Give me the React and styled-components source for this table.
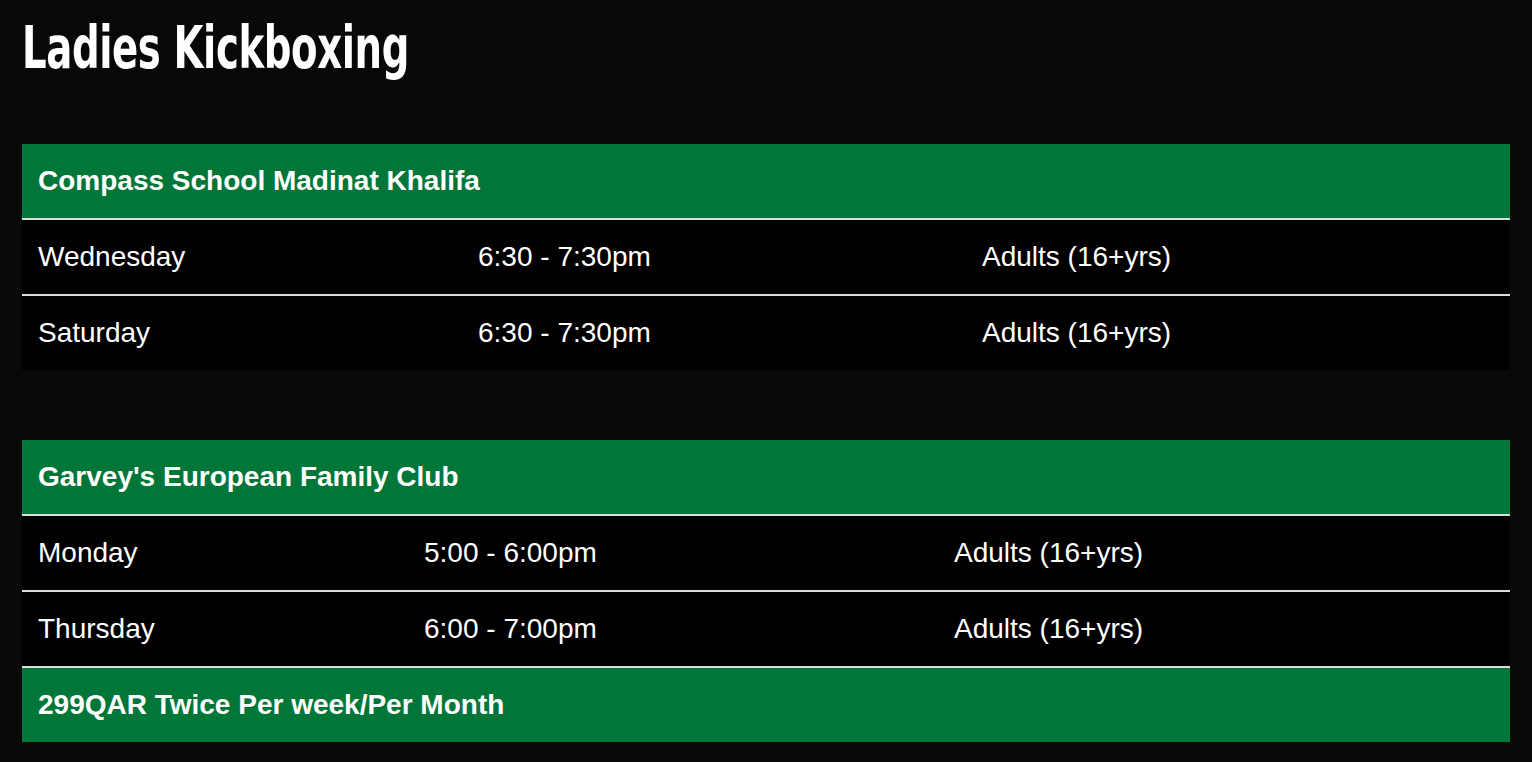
import React from "react";
import styled, { createGlobalStyle } from "styled-components";

// Ladies kickboxing timetable

const GlobalStyle = createGlobalStyle`
  body {
    margin: 0;
    background: #080808;
    font-family: "Liberation Sans", Arial, sans-serif;
    color: #fff;
  }
`;

const Page = styled.div`
  padding: 0 22px 20px;
`;

const Title = styled.h1`
  margin: 0;
  padding: 14px 0 0;
  height: 144px;
  box-sizing: border-box;
  font-family: "DejaVu Sans Condensed", "DejaVu Sans", sans-serif;
  font-weight: 700;
  font-size: 58px;
  line-height: 68px;
  letter-spacing: -0.5px;
  transform: scaleX(0.74);
  transform-origin: left top;
  white-space: nowrap;
`;

const Table = styled.table`
  width: 100%;
  table-layout: fixed;
  border-collapse: separate;
  border-spacing: 0;
  background: #000;
  font-size: 28px;
  line-height: 28px;
  & + & {
    margin-top: 70px;
  }
`;

const Col = styled.col`
  width: ${(p) => p.$w}px;
`;

const Row = styled.tr`
  & + & > td {
    border-top: 2px solid #dcdcdc;
  }
`;

const Cell = styled.td`
  padding: 23px 16px;
  vertical-align: middle;
  white-space: nowrap;
`;

const Banner = styled(Cell)`
  background: #007638;
  font-weight: 700;
`;

const venues = [
  {
    name: "Compass School Madinat Khalifa",
    cols: [440, 504, 544],
    rows: [
      ["Wednesday", "6:30 - 7:30pm", "Adults (16+yrs)"],
      ["Saturday", "6:30 - 7:30pm", "Adults (16+yrs)"],
    ],
  },
  {
    name: "Garvey's European Family Club",
    cols: [386, 530, 572],
    rows: [
      ["Monday", "5:00 - 6:00pm", "Adults (16+yrs)"],
      ["Thursday", "6:00 - 7:00pm", "Adults (16+yrs)"],
    ],
    price: "299QAR Twice Per week/Per Month",
  },
];

export default function App() {
  return (
    <Page>
      <GlobalStyle />
      <Title>Ladies Kickboxing</Title>
      {venues.map((v) => (
        <Table key={v.name}>
          <colgroup>
            {v.cols.map((w, i) => (
              <Col key={i} $w={w} />
            ))}
          </colgroup>
          <tbody>
            <Row>
              <Banner colSpan={3}>{v.name}</Banner>
            </Row>
            {v.rows.map((r) => (
              <Row key={r[0]}>
                {r.map((c, i) => (
                  <Cell key={i}>{c}</Cell>
                ))}
              </Row>
            ))}
            {v.price && (
              <Row>
                <Banner colSpan={3}>{v.price}</Banner>
              </Row>
            )}
          </tbody>
        </Table>
      ))}
    </Page>
  );
}
